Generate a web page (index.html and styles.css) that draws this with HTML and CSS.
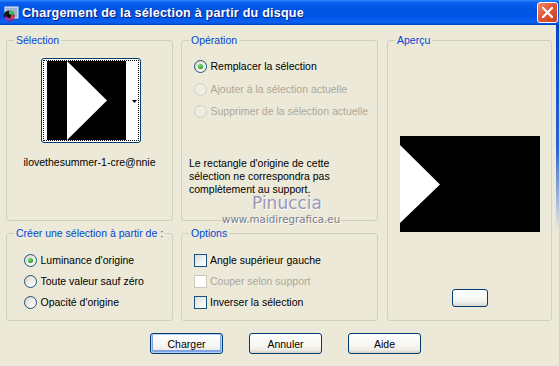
FILE: index.html
```html
<!DOCTYPE html>
<html lang="fr">
<head>
<meta charset="utf-8">
<title>Chargement de la sélection à partir du disque</title>
<link rel="stylesheet" href="styles.css">
</head>
<body>
<div class="window">
  <div class="titlebar">
    <svg class="app-icon" width="17" height="16" viewBox="0 0 17 16">
      <rect x="3" y="1" width="13" height="11" fill="#9fb4cf" stroke="#e8eef6" stroke-width="1"/>
      <circle cx="7" cy="10" r="5.5" fill="#1a1a22"/>
      <path d="M7 10 L7 4.5 A5.5 5.5 0 0 1 12.2 8.5 Z" fill="#2fbf4a"/>
      <path d="M7 10 L12.2 8.5 A5.5 5.5 0 0 1 9 15.1 Z" fill="#d9304a"/>
      <path d="M7 10 L9 15.1 A5.5 5.5 0 0 1 1.6 11.5 Z" fill="#7a3cc8"/>
      <circle cx="7" cy="10" r="2" fill="#0c0c10"/>
    </svg>
    <span class="title">Chargement de la sélection à partir du disque</span>
    <span class="close-btn">
      <svg width="21" height="21" viewBox="0 0 21 21"><path d="M6 6 L15 15 M15 6 L6 15" stroke="#fff" stroke-width="2.2" stroke-linecap="round"/></svg>
    </span>
  </div>
  <div class="content">
    <div class="groups">
      <fieldset class="group g-selection">
        <legend>Sélection</legend>
        <div class="sel-body">
          <div class="thumb">
            <div class="focus">
              <svg class="thumb-img" width="79" height="79" viewBox="0 0 79 79">
                <rect width="79" height="79" fill="#000"/>
                <polygon points="20,0 60,39.5 20,79" fill="#fff"/>
              </svg>
              <svg class="drop-arrow" width="5" height="3" viewBox="0 0 5 3"><polygon points="0,0 5,0 2.5,3" fill="#000"/></svg>
            </div>
          </div>
          <div class="filename">ilovethesummer-1-cre@nnie</div>
        </div>
      </fieldset>

      <fieldset class="group g-operation">
        <legend>Opération</legend>
        <div class="list op-list">
          <div class="item"><span class="radio checked"></span>Remplacer la sélection</div>
          <div class="item disabled"><span class="radio"></span>Ajouter à la sélection actuelle</div>
          <div class="item disabled"><span class="radio"></span>Supprimer de la sélection actuelle</div>
        </div>
        <p class="note">Le rectangle d'origine de cette<br>sélection ne correspondra pas<br>complètement au support.</p>
      </fieldset>

      <fieldset class="group g-apercu">
        <legend>Aperçu</legend>
        <div class="apercu-body">
          <svg class="preview" width="140" height="96" viewBox="0 0 140 96">
            <rect width="140" height="96" fill="#000"/>
            <polygon points="0,9 40,48.5 0,87" fill="#fff"/>
          </svg>
          <span class="mini-btn"></span>
        </div>
      </fieldset>

      <fieldset class="group g-creer">
        <legend>Créer une sélection à partir de :</legend>
        <div class="list src-list">
          <div class="item"><span class="radio checked"></span>Luminance d'origine</div>
          <div class="item"><span class="radio"></span>Toute valeur sauf zéro</div>
          <div class="item"><span class="radio"></span>Opacité d'origine</div>
        </div>
      </fieldset>

      <fieldset class="group g-options">
        <legend>Options</legend>
        <div class="list opt-list">
          <div class="item"><span class="check"></span>Angle supérieur gauche</div>
          <div class="item disabled"><span class="check"></span>Couper selon support</div>
          <div class="item"><span class="check"></span>Inverser la sélection</div>
        </div>
      </fieldset>
    </div>

    <div class="buttons">
      <button class="btn default">Charger</button>
      <button class="btn">Annuler</button>
      <button class="btn">Aide</button>
    </div>
  </div>

  <div class="wm wm-name">Pinuccia</div>
  <div class="wm wm-url">www.maidiregrafica.eu</div>
  <div class="edge"></div>
</div>
</body>
</html>
```

FILE: styles.css
```css
* { box-sizing: border-box; }
html, body { margin: 0; padding: 0; }
body {
  width: 559px;
  height: 366px;
  overflow: hidden;
  font-family: "Liberation Sans", Arial, sans-serif;
  font-size: 10.5px;
  color: #000;
}
.window {
  position: relative;
  width: 559px;
  height: 366px;
  background: #ECE9D8;
  overflow: hidden;
}

/* title bar */
.titlebar {
  height: 25px;
  display: flex;
  align-items: center;
  padding-left: 2px;
  background: linear-gradient(#2d8bff 0%, #0a5fef 10%, #0054e3 35%, #0055e6 70%, #0a62f2 88%, #0046c8 100%);
}
.app-icon { flex: none; margin-top: 2px; }
.title {
  margin-left: 3px;
  color: #fff;
  font-weight: bold;
  font-size: 12.6px;
  letter-spacing: 0.2px;
  text-shadow: 1px 1px 0 #0a1a7a;
  white-space: nowrap;
}
.close-btn {
  margin-left: auto;
  margin-right: 1px;
  margin-top: -1px;
  width: 21px;
  height: 21px;
  border: 1px solid #fff;
  border-radius: 3px;
  background: linear-gradient(135deg, #f08a6a 0%, #e0583a 45%, #c8401f 100%);
  display: flex;
  align-items: center;
  justify-content: center;
}
.close-btn svg { display: block; margin: -1px; }

/* content */
.content { padding: 8px 6px 0 6px; }
.groups {
  display: grid;
  grid-template-columns: 167px 197px 166px;
  grid-template-rows: 188px 95px;
  column-gap: 8px;
  row-gap: 5px;
}
.group {
  margin: 0;
  padding: 0;
  min-width: 0;
  border: 1px solid #D0D0BF;
  border-radius: 3px;
}
.group legend {
  margin-left: 7px;
  padding: 0 2px;
  color: #0046D5;
  line-height: 14px;
  font-size: 10.5px;
}
.g-selection { grid-column: 1; grid-row: 1; }
.g-operation { grid-column: 2; grid-row: 1; }
.g-apercu { grid-column: 3; grid-row: 1 / span 2; margin-left: 1px; }
.g-creer { grid-column: 1; grid-row: 2; }
.g-options { grid-column: 2; grid-row: 2; }

/* selection */
.sel-body {
  display: flex;
  flex-direction: column;
  align-items: center;
}
.thumb {
  margin-top: 11px;
  margin-left: 3px;
  width: 100px;
  height: 85px;
  border: 1px solid #003C74;
  border-radius: 3px;
  padding: 1px;
  background: #fff;
}
.focus {
  width: 100%;
  height: 100%;
  border: 1px dotted #000;
  display: flex;
  align-items: center;
  padding-left: 3px;
}
.thumb-img { display: block; flex: none; }
.drop-arrow { display: block; margin-left: auto; margin-right: 1px; margin-top: 1px; }
.filename {
  margin-top: 13px;
  line-height: 13px;
  white-space: nowrap;
}

/* lists */
.list { display: flex; flex-direction: column; }
.item {
  display: flex;
  align-items: center;
  height: 13px;
  line-height: 13px;
  white-space: nowrap;
}
.item.disabled { color: #ACA899; }
.op-list { margin-top: 13px; padding-left: 11.5px; gap: 9.5px; }
.src-list { margin-top: 13.5px; padding-left: 16.5px; gap: 8px; }
.opt-list { margin-top: 13.5px; padding-left: 12px; gap: 8px; }

.radio {
  position: relative;
  flex: none;
  width: 13px;
  height: 13px;
  margin-right: 4px;
  border-radius: 50%;
  border: 1px solid #1C5180;
  background: linear-gradient(135deg, #d8d5c6 0%, #f4f3ee 60%, #ffffff 100%);
}
.radio.checked::after {
  content: "";
  position: absolute;
  left: 3px;
  top: 3px;
  width: 5px;
  height: 5px;
  border-radius: 50%;
  background: radial-gradient(circle at 40% 35%, #7be37b 0%, #2aa82a 60%, #1a8a1a 100%);
}
.disabled .radio {
  border-color: #D2CFC0;
  background: #EFEDE3;
}
.check {
  flex: none;
  width: 13px;
  height: 13px;
  margin-right: 3px;
  border: 1px solid #1C5180;
  background: linear-gradient(135deg, #dcdcd7 0%, #f3f3f0 60%, #ffffff 100%);
}
.disabled .check {
  border-color: #CAC8BB;
  background: #fff;
}

.note {
  margin: 38.5px 0 0 7px;
  line-height: 13px;
}

/* apercu */
.apercu-body {
  display: flex;
  flex-direction: column;
  align-items: center;
}
.preview { display: block; margin-top: 89px; }
.mini-btn {
  display: block;
  margin-top: 57px;
  width: 36px;
  height: 18px;
  border: 1px solid #003C74;
  border-radius: 3px;
  background: linear-gradient(#ffffff 0%, #f3f3ef 70%, #dcd8cc 100%);
}

/* buttons */
.buttons {
  display: flex;
  gap: 26px;
  margin-top: 12px;
  padding-left: 144px;
}
.btn {
  width: 73px;
  height: 21px;
  padding: 0;
  font-family: "Liberation Sans", Arial, sans-serif;
  font-size: 10.5px;
  color: #000;
  border: 1px solid #003C74;
  border-radius: 3px;
  background: linear-gradient(#ffffff 0%, #f6f6f2 60%, #ecebe4 85%, #d6d0c5 100%);
}
.btn.default {
  box-shadow: inset 0 0 0 1px #b9d1fa, inset 0 -1px 0 2px #7fa3e4;
}

/* watermark overlay */
.wm {
  position: absolute;
  white-space: nowrap;
  pointer-events: none;
}
.wm-name {
  left: 252px;
  top: 198px;
  line-height: 10px;
  font-family: "DejaVu Sans", sans-serif;
  font-size: 17px;
  color: #9898b8;
  text-shadow: 1px 1px 0 #fff, -1px -1px 0 #e4e2d8;
}
.wm-url {
  left: 222px;
  top: 213px;
  line-height: 12px;
  font-family: "DejaVu Sans", sans-serif;
  font-size: 10.3px;
  color: #7c7c8c;
  text-shadow: 1px 1px 0 #fff;
}
.edge {
  position: absolute;
  right: 0;
  top: 25px;
  width: 3px;
  height: 205px;
  background: linear-gradient(#0046c8 0%, #2a62d8 60%, rgba(236,233,216,0) 100%);
}
```
